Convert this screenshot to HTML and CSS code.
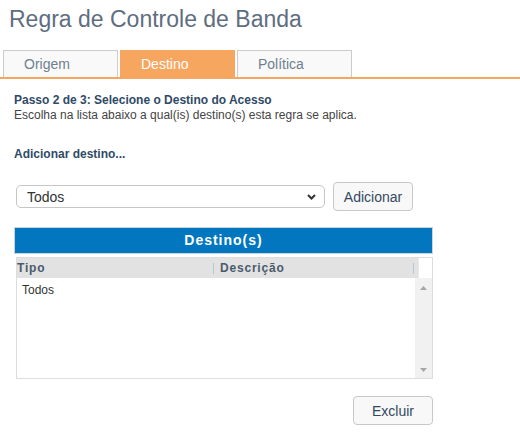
FILE: index.html
```html
<!DOCTYPE html>
<html lang="pt">
<head>
<meta charset="utf-8">
<title>Regra de Controle de Banda</title>
<link rel="stylesheet" href="styles.css">
</head>
<body>
<div class="page">
  <h1 class="title">Regra de Controle de Banda</h1>
  <div class="tabs">
    <div class="tab">Origem</div>
    <div class="tab active">Destino</div>
    <div class="tab">Política</div>
  </div>
  <div class="content">
    <div class="step">
      <div class="step-title">Passo 2 de 3: Selecione o Destino do Acesso</div>
      <div class="step-desc">Escolha na lista abaixo a qual(is) destino(s) esta regra se aplica.</div>
    </div>
    <div class="add-label">Adicionar destino...</div>
    <div class="add-row">
      <div class="select">
        <span class="select-text">Todos</span>
        <svg class="chev" width="9" height="6" viewBox="0 0 9 6"><polyline points="1,1 4.5,4.5 8,1" fill="none" stroke="#333" stroke-width="2"/></svg>
      </div>
      <button class="btn btn-add">Adicionar</button>
    </div>
    <div class="panel-head">Destino(s)</div>
    <div class="grid">
      <div class="grid-head">
        <div class="gh-cells">
          <div class="th th-tipo">Tipo</div>
          <span class="sep"></span>
          <div class="th th-desc">Descrição</div>
          <span class="sep"></span>
        </div>
        <div class="gh-corner"></div>
      </div>
      <div class="grid-body">
        <div class="rows">
          <div class="row">Todos</div>
        </div>
        <div class="scroll">
          <svg width="7" height="4" viewBox="0 0 7 4"><polygon points="0,4 3.5,0 7,4" fill="#a6a6a6"/></svg>
          <svg width="7" height="4" viewBox="0 0 7 4"><polygon points="0,0 7,0 3.5,4" fill="#a6a6a6"/></svg>
        </div>
      </div>
    </div>
    <div class="actions">
      <button class="btn btn-del">Excluir</button>
    </div>
  </div>
</div>
</body>
</html>
```

FILE: styles.css
```css
* { box-sizing: border-box; }
html, body { margin: 0; padding: 0; background: #fff; }
body {
  font-family: "Liberation Sans", Arial, sans-serif;
  color: #333;
  width: 520px;
}
.page { padding-top: 6px; }
.title {
  margin: 0 0 18px 9px;
  font-size: 23px;
  line-height: 26px;
  font-weight: normal;
  color: #5e6e7f;
}
.tabs {
  display: flex;
  gap: 2px;
  padding-left: 3px;
  border-bottom: 2px solid #f7a65f;
}
.tab {
  width: 115px;
  height: 27px;
  padding: 5px 20px;
  border: 1px solid #cccccc;
  border-bottom: none;
  background: #f9f9f9;
  font-size: 14px;
  line-height: 16px;
  color: #6f7f90;
}
.tab.active {
  background: #f7a65f;
  border-color: #f7a65f;
  color: #fff;
}
.content { padding: 0 14px; }
.step { margin-top: 14px; font-size: 12px; line-height: 15px; }
.step-title { font-weight: bold; color: #2f4a66; }
.step-desc { color: #444; }
.add-label {
  margin-top: 24px;
  font-size: 12px;
  line-height: 14px;
  font-weight: bold;
  color: #2f4a66;
}
.add-row {
  display: flex;
  align-items: center;
  gap: 8px;
  margin-top: 21px;
  margin-left: 2px;
}
.select {
  width: 309px;
  height: 23px;
  border: 1px solid #c6c6c6;
  border-radius: 5px;
  background: #fff;
  display: flex;
  align-items: center;
  justify-content: space-between;
  padding: 0 8px 0 10px;
  font-size: 14px;
  color: #333;
}
.chev { display: block; }
.btn {
  font-family: "Liberation Sans", Arial, sans-serif;
  font-size: 14px;
  color: #34495e;
  background: #f8f8f8;
  border: 1px solid #c8c8c8;
  border-radius: 4px;
  width: 80px;
  height: 29px;
  padding: 0;
}
.panel-head {
  margin-top: 16px;
  width: 419px;
  height: 27px;
  background: #0277bf;
  border: 1px solid #c9d3db;
  color: #fff;
  font-weight: bold;
  font-size: 14px;
  letter-spacing: 1px;
  line-height: 25px;
  text-align: center;
}
.grid {
  margin: 3px 0 0 2px;
  width: 417px;
  height: 122px;
  border: 1px solid #dddddd;
  display: flex;
  flex-direction: column;
}
.grid-head { display: flex; height: 20px; }
.gh-cells {
  width: 401px;
  background: #e2e2e2;
  display: flex;
  align-items: center;
  padding-right: 4px;
}
.th {
  font-size: 12px;
  font-weight: bold;
  letter-spacing: 0.8px;
  color: #4a5b6c;
  line-height: 14px;
}
.th-tipo { width: 196px; }
.th-desc { flex: 1; margin-left: 6px; }
.sep {
  display: block;
  width: 1px;
  height: 11px;
  background: #b3c9d4;
}
.gh-corner { flex: 1; background: #fff; border-left: 1px solid #e8e8e8; }
.grid-body { flex: 1; display: flex; }
.rows { width: 398px; }
.row {
  padding: 5px 5px;
  font-size: 12px;
  line-height: 14px;
  color: #333;
}
.scroll {
  flex: 1;
  background: #f1f1f1;
  display: flex;
  flex-direction: column;
  justify-content: space-between;
  align-items: center;
  padding: 8px 0 6px;
}
.scroll svg { display: block; }
.actions {
  width: 419px;
  margin-top: 17px;
  display: flex;
  justify-content: flex-end;
}
.btn-del { width: 80px; height: 29px; }
```
